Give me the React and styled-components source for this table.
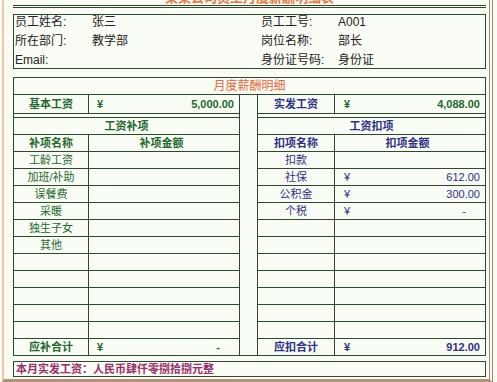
import React from 'react';
import styled, { createGlobalStyle } from 'styled-components';

const GlobalStyle = createGlobalStyle`
  html, body {
    margin: 0;
    padding: 0;
    background: #f9fbf5;
  }
  body {
    font-family: "Liberation Sans", "Noto Sans CJK SC", sans-serif;
    color: #222;
  }
`;

const LINE = '#2d4a2d';
const GREEN = '#23692a';
const NAVY = '#2e2f86';

const Frame = styled.div`
  box-sizing: border-box;
  width: 491px;
  height: 382px;
  margin-left: 2px;
  padding: 0 3px 2px 9px;
  border-left: 2px solid #f0c6a4;
  border-right: 4px double #a8876a;
  border-bottom: 3px solid #b39377;
  background: #f9fbf5;
`;

const Title = styled.div`
  height: 5px;
  overflow: hidden;
  display: flex;
  justify-content: center;
  align-items: flex-end;

  span {
    font-size: 13px;
    line-height: 14px;
    font-weight: bold;
    color: #e8773e;
    white-space: nowrap;
  }
`;

const DoubleRule = styled.div`
  height: 1px;
  border-top: 1px solid ${LINE};
  border-bottom: 1px solid ${LINE};
`;

const InfoBox = styled.div`
  margin-top: 6px;
  height: 53px;
  border: 1px solid ${LINE};
  padding-left: 1px;
  display: grid;
  grid-template-columns: 77px 169px 77px 1fr;
  grid-auto-rows: 19px;
  font-size: 12px;
  line-height: 15px;
  color: #222;
  overflow: hidden;
`;

const SalaryTable = styled.div`
  margin-top: 8px;
  border: 1px solid ${LINE};
`;

const Caption = styled.div`
  height: 16px;
  line-height: 16px;
  border-bottom: 1px solid ${LINE};
  text-align: center;
  font-size: 12px;
  color: #e4693c;
`;

const Halves = styled.div`
  display: flex;
  justify-content: space-between;
`;

const Half = styled.div`
  width: ${p => (p.$side === 'left' ? 225 : 227)}px;
  ${p => (p.$side === 'left' ? `border-right: 1px solid ${LINE};` : `border-left: 1px solid ${LINE};`)}
  color: ${p => (p.$side === 'left' ? GREEN : NAVY)};
  font-size: 11px;
`;

const Row = styled.div`
  display: grid;
  grid-template-columns: ${p => p.$name}px 1fr;
  height: ${p => p.$h || 16}px;
  line-height: ${p => p.$h || 16}px;
  border-bottom: ${p => (p.$last ? 'none' : `1px solid ${LINE}`)};
  font-weight: ${p => (p.$bold ? 'bold' : 'normal')};
`;

const Spacer = styled.div`
  height: 3px;
  border-bottom: 1px solid ${LINE};
`;

const Section = styled.div`
  height: 16px;
  line-height: 16px;
  text-align: center;
  font-weight: bold;
  border-bottom: 1px solid ${LINE};
`;

const NameCell = styled.div`
  border-right: 1px solid ${LINE};
  text-align: center;
  white-space: nowrap;
`;

const AmountCell = styled.div`
  display: flex;
  justify-content: ${p => (p.$center ? 'center' : 'space-between')};
  padding: 0 5px 0 ${p => p.$pad}px;
  color: ${p => p.$color || 'inherit'};
`;

const Dash = styled.span`
  margin-right: 14px;
`;

const Summary = styled.div`
  margin-top: 5px;
  height: 14px;
  line-height: 14px;
  border: 1px solid ${LINE};
  padding-left: 2px;
  font-size: 11px;
  font-weight: bold;
  color: #9a2d69;
`;

const info = [
  ['员工姓名:', '张三', '员工工号:', 'A001'],
  ['所在部门:', '教学部', '岗位名称:', '部长'],
  ['Email:', '', '身份证号码:', '身份证'],
];

const leftItems = [
  ['工龄工资'], ['加班/补助'], ['误餐费'], ['采暖'], ['独生子女'], ['其他'],
  [''], [''], [''], [''], [''],
];

const rightItems = [
  ['扣款'], ['社保', '612.00'], ['公积金', '300.00'], ['个税', '-'],
  [''], [''], [''], [''], [''], [''], [''],
];

function Amount({ value, pad, color }) {
  if (value === undefined) return <AmountCell $pad={pad} />;
  return (
    <AmountCell $pad={pad} $color={color}>
      <span>¥</span>
      {value === '-' ? <Dash>-</Dash> : <span>{value}</span>}
    </AmountCell>
  );
}

function SidePanel({ side, base, baseValue, baseColor, section, nameHead, amountHead, items, total, totalValue }) {
  const nameW = side === 'left' ? 75 : 77;
  const pad = side === 'left' ? 8 : 9;
  return (
    <Half $side={side}>
      <Row $name={nameW} $h={18} $bold>
        <NameCell>{base}</NameCell>
        <Amount value={baseValue} pad={pad} color={baseColor} />
      </Row>
      <Spacer />
      <Section>{section}</Section>
      <Row $name={nameW} $bold>
        <NameCell>{nameHead}</NameCell>
        <AmountCell $center $pad={0}>{amountHead}</AmountCell>
      </Row>
      {items.map(([name, value], i) => (
        <Row key={i} $name={nameW}>
          <NameCell>{name}</NameCell>
          <Amount value={value} pad={pad} />
        </Row>
      ))}
      <Row $name={nameW} $bold $last>
        <NameCell>{total}</NameCell>
        <Amount value={totalValue} pad={pad} />
      </Row>
    </Half>
  );
}

export default function App() {
  return (
    <>
      <GlobalStyle />
      <Frame>
        <Title><span>某某公司员工月度薪酬明细表</span></Title>
        <DoubleRule />
        <InfoBox>
          {info.flat().map((t, i) => <div key={i}>{t}</div>)}
        </InfoBox>
        <SalaryTable>
          <Caption>月度薪酬明细</Caption>
          <Halves>
            <SidePanel
              side="left"
              base="基本工资"
              baseValue="5,000.00"
              section="工资补项"
              nameHead="补项名称"
              amountHead="补项金额"
              items={leftItems}
              total="应补合计"
              totalValue="-"
            />
            <SidePanel
              side="right"
              base="实发工资"
              baseValue="4,088.00"
              baseColor={GREEN}
              section="工资扣项"
              nameHead="扣项名称"
              amountHead="扣项金额"
              items={rightItems}
              total="应扣合计"
              totalValue="912.00"
            />
          </Halves>
        </SalaryTable>
        <Summary>本月实发工资：人民币肆仟零捌拾捌元整</Summary>
      </Frame>
    </>
  );
}
